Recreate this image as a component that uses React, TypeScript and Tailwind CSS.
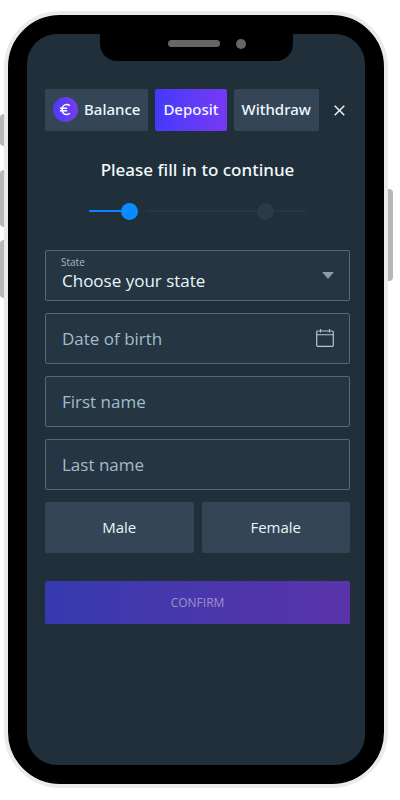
import React, { useState } from 'react';

type Tab = 'balance' | 'deposit' | 'withdraw';

const fieldClass =
  'h-[51px] w-full rounded-[2px] border border-[#566874] bg-[#253541] px-4 text-[17px] text-[#e9f5fb] placeholder:text-[#a3bccb] placeholder:opacity-100 focus:outline-none focus:border-[#0a84ff]';

function TabButton({ active, onClick, className = '', children }: {
  active: boolean;
  onClick: () => void;
  className?: string;
  children: React.ReactNode;
}) {
  return (
    <button
      type="button"
      onClick={onClick}
      className={`flex h-[42px] items-center justify-center rounded-[2px] px-2 pb-[2px] font-['Noto_Sans',sans-serif] text-[15px] font-medium text-[#edf8ff] ${
        active ? 'bg-linear-to-r from-[#4339fa] to-[#7639f5]' : 'bg-[#344555]'
      } ${className}`}
    >
      {children}
    </button>
  );
}

function Steps() {
  return (
    <div className="mt-5 flex h-[18px] items-center pr-11 pl-11" role="img" aria-label="Step 1 of 2">
      <div className="h-[2px] w-8 bg-[#0a84ff]" />
      <div className="size-[17px] rounded-full bg-[#0a8bff]" />
      <div className="ml-2 h-[2px] flex-1 bg-[#293743]" />
      <div className="size-[17px] rounded-full bg-[#2b3a49]" />
      <div className="h-[2px] w-8 bg-[#293743]" />
    </div>
  );
}

export default function App() {
  const [tab, setTab] = useState<Tab>('deposit');
  const [gender, setGender] = useState('');

  return (
    <div className="flex min-h-screen bg-white pt-[11px] pr-3 pb-3 pl-1 font-['Open_Sans',sans-serif]">
      <div className="relative flex w-full rounded-[56px] border-4 border-[#ebebeb] bg-black p-[19px]">
        {/* Side buttons */}
        <div className="absolute top-[99px] -left-2 h-8 w-1 rounded-l-[4px] bg-[#b8b8b8]" />
        <div className="absolute top-[155px] -left-2 h-[57px] w-1 rounded-l-[4px] bg-[#b8b8b8]" />
        <div className="absolute top-[225px] -left-2 h-[58px] w-1 rounded-l-[4px] bg-[#b8b8b8]" />
        <div className="absolute top-[174px] -right-[9px] h-[92px] w-[5px] rounded-r-[4px] bg-[#b8b8b8]" />

        <main className="flex w-full flex-col rounded-[30px] bg-[#212f3a] pr-[15px] pb-8 pl-[18px]">
          {/* Notch */}
          <div className="mr-[2px] flex h-[27px] w-[193px] items-center justify-center self-center rounded-b-[17px] bg-black pb-2">
            <div className="ml-5 h-[7px] w-[52px] rounded-full bg-[#666666]" />
            <div className="ml-4 size-[10px] rounded-full bg-[#666666]" />
          </div>

          <nav className="mt-7 flex items-center gap-[7px]">
            <TabButton active={tab === 'balance'} onClick={() => setTab('balance')} className="gap-[6px]">
              <svg width="25" height="25" viewBox="0 0 25 25" aria-hidden="true">
                <defs>
                  <linearGradient id="coin" x1="0" y1="0" x2="1" y2="0">
                    <stop offset="0" stopColor="#4a3cf8" />
                    <stop offset="1" stopColor="#773ced" />
                  </linearGradient>
                </defs>
                <circle cx="12.5" cy="12.5" r="12.5" fill="url(#coin)" />
                <path
                  d="M16.8 8.7C16 7.9 15 7.5 13.8 7.5C11 7.5 9.1 9.7 9.1 12.5C9.1 15.4 11 17.5 13.8 17.5C15 17.5 16 17.1 16.8 16.3M6.9 11.3H14.2M6.9 13.8H14.2"
                  fill="none"
                  stroke="#ffffff"
                  strokeWidth="1.6"
                />
              </svg>
              Balance
            </TabButton>
            <TabButton active={tab === 'deposit'} onClick={() => setTab('deposit')}>
              Deposit
            </TabButton>
            <TabButton active={tab === 'withdraw'} onClick={() => setTab('withdraw')}>
              Withdraw
            </TabButton>
            <button type="button" aria-label="Close" className="flex h-[42px] flex-1 items-center justify-center pl-1">
              <svg width="11" height="11" viewBox="0 0 11 11" aria-hidden="true">
                <path d="M.7 .7L10.3 10.3M10.3 .7L.7 10.3" stroke="#edf8ff" strokeWidth="1.4" />
              </svg>
            </button>
          </nav>

          <h1 className="mt-[27px] text-center font-['Noto_Sans',sans-serif] text-[17px] leading-6 font-medium text-[#f0fafc]">
            Please fill in to continue
          </h1>

          <Steps />

          <form className="mt-[30px] flex flex-col gap-3" onSubmit={e => e.preventDefault()}>
            <div className="relative">
              <label htmlFor="state" className="absolute top-1 left-4 text-[10px] leading-4 text-[#a3bccb]">State</label>
              <select id="state" defaultValue="" className={`${fieldClass} block appearance-none pt-[10px]`}>
                <option value="">Choose your state</option>
              </select>
              <svg className="pointer-events-none absolute top-[22px] right-4" width="12" height="7" viewBox="0 0 12 7" aria-hidden="true">
                <path d="M0 0H12L6 7Z" fill="#8b9ba7" />
              </svg>
            </div>

            <div className="relative">
              <input type="text" aria-label="Date of birth" placeholder="Date of birth" className={`${fieldClass} block`} />
              <button type="button" aria-label="Open calendar" className="absolute top-4 right-4">
                <svg width="18" height="18" viewBox="0 0 18 18" fill="none" stroke="#b6c7d2" aria-hidden="true">
                  <rect x=".7" y="2" width="16.6" height="15.3" rx="1" strokeWidth="1.2" />
                  <path d="M.7 5.8H17.3M4.5 0V3.6M13.5 0V3.6" strokeWidth="1.1" />
                </svg>
              </button>
            </div>

            <input type="text" aria-label="First name" placeholder="First name" className={fieldClass} />
            <input type="text" aria-label="Last name" placeholder="Last name" className={fieldClass} />

            <div className="grid grid-cols-2 gap-2">
              {['Male', 'Female'].map(item => (
                <button
                  key={item}
                  type="button"
                  aria-pressed={gender === item}
                  onClick={() => setGender(item)}
                  className="h-[51px] rounded-[2px] bg-[#344555] text-[15px] text-[#e9f5fb] aria-pressed:bg-[#4339fa]"
                >
                  {item}
                </button>
              ))}
            </div>

            <button
              type="submit"
              className="mt-4 h-[43px] rounded-[2px] bg-linear-to-r from-[#353aae] to-[#5a33aa] text-[12px] text-[#9b93c6]"
            >
              CONFIRM
            </button>
          </form>
        </main>
      </div>
    </div>
  );
}
